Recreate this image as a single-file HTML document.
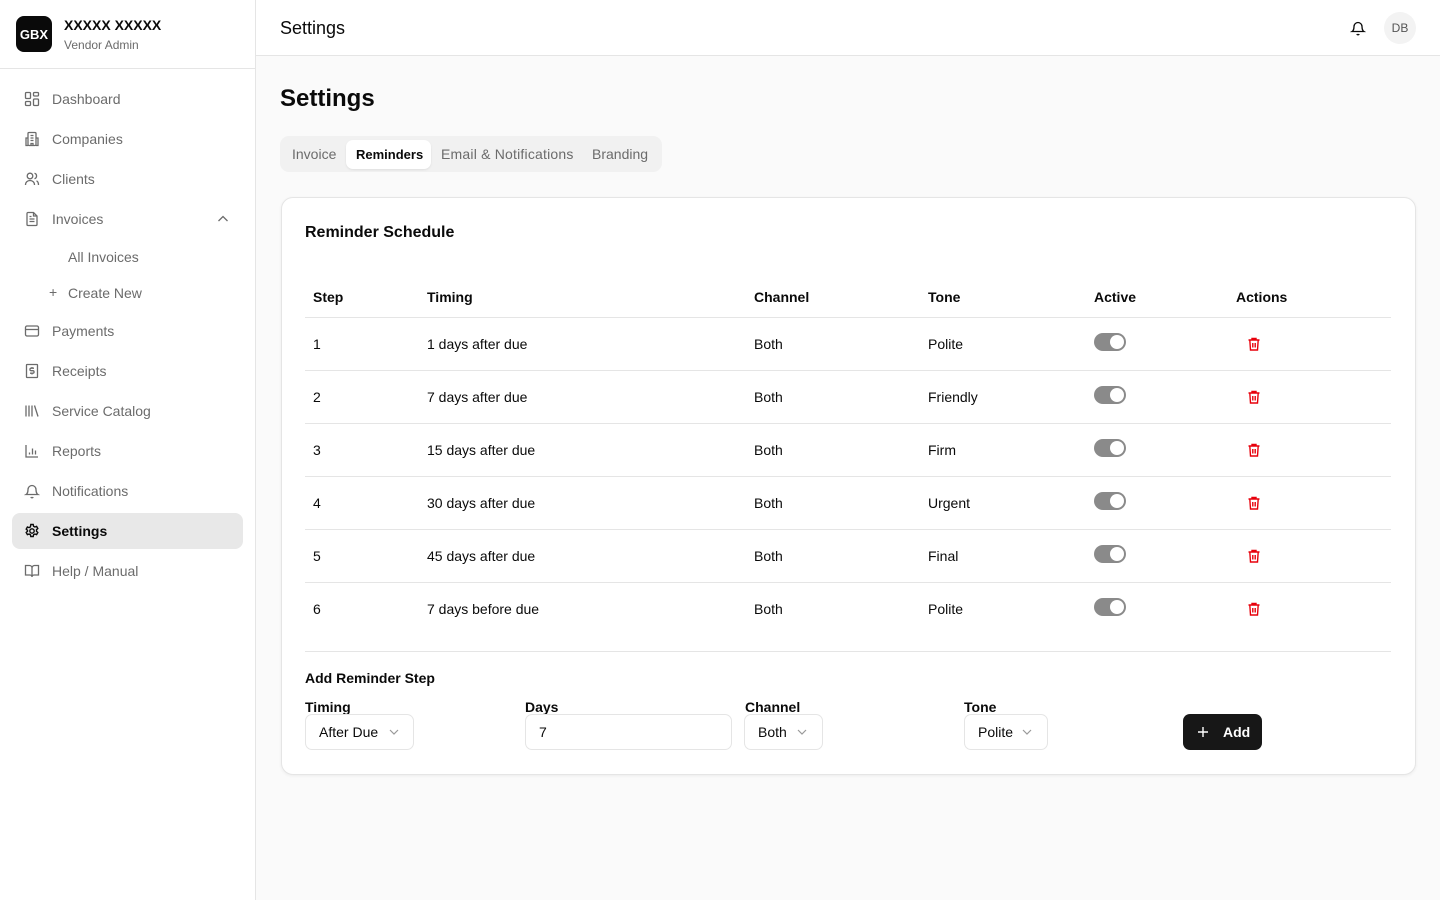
<!DOCTYPE html>
<html><head><meta charset="utf-8">
<style>
*{box-sizing:border-box;margin:0;padding:0}
body{width:1440px;height:900px;overflow:hidden;background:#fafafa;font-family:"Liberation Sans","DejaVu Sans",sans-serif;color:#0a0a0a;position:relative}
.abs{position:absolute}
#side{position:absolute;left:0;top:0;width:256px;height:900px;background:#fff;border-right:1px solid #e5e5e5}
.logo{position:absolute;left:16px;top:16px;width:36px;height:36px;border-radius:8px;background:#0a0a0a;color:#fff;font-weight:bold;font-size:13px;display:flex;align-items:center;justify-content:center}
.nav{position:absolute;left:12px;width:231px;height:36px;border-radius:8px;display:flex;align-items:center;font-size:14px;color:#6b6b6b}
.nav svg{position:absolute;left:12px;top:10px}
.nav span{position:absolute;left:40px}
.nav.act{background:#e8e8e8;color:#0a0a0a;font-weight:bold}
.th{position:absolute;top:289px;font-size:14px;font-weight:bold}
.cell{position:absolute;font-size:14px}
.line{position:absolute;left:305px;width:1086px;height:1px;background:#e5e5e5}
.tog{position:absolute;left:1094px;width:32px;height:18px;border-radius:9px;background:#8a8a8a}
.tog:after{content:"";position:absolute;right:2px;top:2px;width:14px;height:14px;border-radius:50%;background:#fff}
.inp{position:absolute;top:714px;height:36px;border:1px solid #e5e5e5;border-radius:7px;background:#fff;font-size:14px;padding-left:13px;line-height:34px}
.lab{position:absolute;top:699px;font-size:14px;font-weight:bold}
.chev{position:absolute;top:13px}
</style></head><body>
<div id="side">
 <div class="logo">GBX</div>
 <div class="abs" style="left:64px;top:17px;font-size:14px;font-weight:bold">XXXXX XXXXX</div>
 <div class="abs" style="left:64px;top:38px;font-size:12px;color:#6b6b6b">Vendor Admin</div>
 <div class="abs" style="left:0;top:68px;width:256px;height:1px;background:#e5e5e5"></div>

 <div class="nav" style="top:81px"><svg width="16" height="16" viewBox="0 0 16 16" fill="none" stroke="#6b6b6b" stroke-width="1.3"><rect x="1.5" y="1.5" width="5" height="6" rx="1"/><rect x="9.5" y="1.5" width="5" height="3.5" rx="1"/><rect x="9.5" y="8" width="5" height="6.5" rx="1"/><rect x="1.5" y="10.5" width="5" height="4" rx="1"/></svg><span>Dashboard</span></div>
 <div class="nav" style="top:121px"><svg width="16" height="16" viewBox="0 0 16 16" fill="none" stroke="#6b6b6b" stroke-width="1.3"><rect x="4" y="1.5" width="8" height="13" rx="1"/><path d="M4 7H2v7.5h2M12 7h2v7.5h-2M6.5 4.5h3M6.5 7h3M6.5 9.5h3M7 14.5v-2h2v2"/></svg><span>Companies</span></div>
 <div class="nav" style="top:161px"><svg width="16" height="16" viewBox="0 0 16 16" fill="none" stroke="#6b6b6b" stroke-width="1.3"><circle cx="6" cy="5" r="2.8"/><path d="M1.5 14c0-2.8 2-4.5 4.5-4.5s4.5 1.7 4.5 4.5M10.5 2.3a2.8 2.8 0 0 1 0 5.4M12.5 9.8c1.3.6 2 2 2 4.2"/></svg><span>Clients</span></div>
 <div class="nav" style="top:201px"><svg width="16" height="16" viewBox="0 0 16 16" fill="none" stroke="#6b6b6b" stroke-width="1.3"><path d="M9.5 1.5H4a1 1 0 0 0-1 1v11a1 1 0 0 0 1 1h8a1 1 0 0 0 1-1V5z"/><path d="M9.5 1.5V5H13M5.5 8h5M5.5 10.5h5M5.5 5.5h2"/></svg><span>Invoices</span><svg style="left:205px;top:14px" width="12" height="8" viewBox="0 0 12 8" fill="none" stroke="#6b6b6b" stroke-width="1.3"><path d="M1.5 6L6 1.5 10.5 6"/></svg></div>
 <div class="abs" style="left:68px;top:249px;font-size:14px;color:#6b6b6b">All Invoices</div>
 <div class="abs" style="left:49px;top:284px;font-size:14px;color:#6b6b6b">+</div>
 <div class="abs" style="left:68px;top:285px;font-size:14px;color:#6b6b6b">Create New</div>
 <div class="nav" style="top:313px"><svg width="16" height="16" viewBox="0 0 16 16" fill="none" stroke="#6b6b6b" stroke-width="1.3"><rect x="1.5" y="3" width="13" height="10" rx="1.5"/><path d="M1.5 6.5h13"/></svg><span>Payments</span></div>
 <div class="nav" style="top:353px"><svg width="16" height="16" viewBox="0 0 16 16" fill="none" stroke="#6b6b6b" stroke-width="1.3"><rect x="2.5" y="1.5" width="11" height="13" rx="0.5"/><path d="M10 5.2H7.2a1.2 1.2 0 0 0 0 2.5h1.6a1.2 1.2 0 0 1 0 2.5H6M8 4v1.2M8 10.2v1.3"/></svg><span>Receipts</span></div>
 <div class="nav" style="top:393px"><svg width="16" height="16" viewBox="0 0 16 16" fill="none" stroke="#6b6b6b" stroke-width="1.3"><path d="M2 2.5v11M5 2.5v11M8 2.5v11M10.5 2.5l3.5 11"/></svg><span>Service Catalog</span></div>
 <div class="nav" style="top:433px"><svg width="16" height="16" viewBox="0 0 16 16" fill="none" stroke="#6b6b6b" stroke-width="1.3"><path d="M2 2v12h12M5.5 11.5v-2M8.5 11.5v-6M11.5 11.5v-4"/></svg><span>Reports</span></div>
 <div class="nav" style="top:473px"><svg width="16" height="16" viewBox="0 0 16 16" fill="none" stroke="#6b6b6b" stroke-width="1.3"><path d="M4 6.5a4 4 0 0 1 8 0c0 4 1.8 5 1.8 5H2.2S4 10.5 4 6.5M6.8 14a1.3 1.3 0 0 0 2.4 0"/></svg><span>Notifications</span></div>
 <div class="nav act" style="top:513px"><svg width="16" height="16" viewBox="0 0 16 16" fill="none" stroke="#0a0a0a" stroke-width="1.4"><circle cx="8" cy="8" r="2.2"/><path d="M6.8 1.5h2.4l.4 1.8 1.3.7 1.7-.6 1.2 2.1-1.3 1.2v1.6l1.3 1.2-1.2 2.1-1.7-.6-1.3.7-.4 1.8H6.8l-.4-1.8-1.3-.7-1.7.6-1.2-2.1 1.3-1.2V7.3L2.2 6.1l1.2-2.1 1.7.6 1.3-.7z"/></svg><span>Settings</span></div>
 <div class="nav" style="top:553px"><svg width="16" height="16" viewBox="0 0 16 16" fill="none" stroke="#6b6b6b" stroke-width="1.3"><path d="M1.5 2.5h4A2.5 2.5 0 0 1 8 5v9a2 2 0 0 0-2-2H1.5zM14.5 2.5h-4A2.5 2.5 0 0 0 8 5v9a2 2 0 0 1 2-2h4.5z"/></svg><span>Help / Manual</span></div>
</div>

<div class="abs" style="left:256px;top:0;width:1184px;height:56px;background:#fff;border-bottom:1px solid #e5e5e5"></div>
<div class="abs" style="left:280px;top:18px;font-size:18px">Settings</div>
<svg class="abs" style="left:1350px;top:20px" width="16" height="16" viewBox="0 0 16 16" fill="none" stroke="#0a0a0a" stroke-width="1.3"><path d="M4 6.5a4 4 0 0 1 8 0c0 4 1.8 5 1.8 5H2.2S4 10.5 4 6.5M6.8 14a1.3 1.3 0 0 0 2.4 0"/></svg>
<div class="abs" style="left:1384px;top:12px;width:32px;height:32px;border-radius:50%;background:#f3f3f3;font-size:12px;color:#555;display:flex;align-items:center;justify-content:center">DB</div>

<div class="abs" style="left:280px;top:85px;font-size:24px;font-weight:bold">Settings</div>

<div class="abs" style="left:280px;top:136px;width:382px;height:36px;border-radius:9px;background:#f1f1f1"></div>
<div class="abs" style="left:346px;top:140px;width:85px;height:29px;border-radius:7px;background:#fff;box-shadow:0 1px 2px rgba(0,0,0,.08)"></div>
<div class="abs" style="left:292px;top:146px;font-size:14px;color:#6b6b6b">Invoice</div>
<div class="abs" style="left:356px;top:147px;font-size:13px;font-weight:bold">Reminders</div>
<div class="abs" style="left:441px;top:146px;font-size:14px;color:#6b6b6b;letter-spacing:0.2px">Email &amp; Notifications</div>
<div class="abs" style="left:592px;top:146px;font-size:14px;color:#6b6b6b">Branding</div>

<div class="abs" style="left:281px;top:197px;width:1135px;height:578px;border:1px solid #e5e5e5;border-radius:12px;background:#fff;box-shadow:0 1px 3px rgba(0,0,0,.06)"></div>
<div class="abs" style="left:305px;top:224px;font-size:16px;font-weight:bold">Reminder Schedule</div>

<div class="th" style="left:313px">Step</div>
<div class="th" style="left:427px">Timing</div>
<div class="th" style="left:754px">Channel</div>
<div class="th" style="left:928px">Tone</div>
<div class="th" style="left:1094px">Active</div>
<div class="th" style="left:1236px">Actions</div>
<div class="line" style="top:317px"></div>

<div id="rows"></div>
<script>
var d=[["1","1 days after due","Polite"],["2","7 days after due","Friendly"],["3","15 days after due","Firm"],["4","30 days after due","Urgent"],["5","45 days after due","Final"],["6","7 days before due","Polite"]];
var h="";
d.forEach(function(r,i){var c=344+53*i;var t=c-8;
h+='<div class="cell" style="left:313px;top:'+t+'px">'+r[0]+'</div><div class="cell" style="left:427px;top:'+t+'px">'+r[1]+'</div><div class="cell" style="left:754px;top:'+t+'px">Both</div><div class="cell" style="left:928px;top:'+t+'px">'+r[2]+'</div><div class="tog" style="top:'+(c-11)+'px"></div>';
h+='<svg class="abs" style="left:1246px;top:'+(c-8)+'px" width="16" height="16" viewBox="0 0 16 16" fill="none" stroke="#e7000b" stroke-width="1.4"><path d="M2.5 4h11M6 4V2.5h4V4M3.8 4l.7 10h7l.7-10M6.8 7v4.5M9.2 7v4.5"/></svg>';
if(i<5)h+='<div class="line" style="top:'+(c+26)+'px"></div>';});
document.getElementById("rows").innerHTML=h;
</script>
<div class="line" style="top:651px"></div>

<div class="abs" style="left:305px;top:670px;font-size:14px;font-weight:bold">Add Reminder Step</div>
<div class="lab" style="left:305px">Timing</div>
<div class="lab" style="left:525px">Days</div>
<div class="lab" style="left:745px">Channel</div>
<div class="lab" style="left:964px">Tone</div>
<div class="inp" style="left:305px;width:109px">After Due<svg class="chev" style="left:83px" width="10" height="8" viewBox="0 0 10 8" fill="none" stroke="#999" stroke-width="1.2"><path d="M1 2l4 4 4-4"/></svg></div>
<div class="inp" style="left:525px;width:207px">7</div>
<div class="inp" style="left:744px;width:79px">Both<svg class="chev" style="left:52px" width="10" height="8" viewBox="0 0 10 8" fill="none" stroke="#999" stroke-width="1.2"><path d="M1 2l4 4 4-4"/></svg></div>
<div class="inp" style="left:964px;width:84px">Polite<svg class="chev" style="left:57px" width="10" height="8" viewBox="0 0 10 8" fill="none" stroke="#999" stroke-width="1.2"><path d="M1 2l4 4 4-4"/></svg></div>
<div class="abs" style="left:1183px;top:714px;width:79px;height:36px;border-radius:7px;background:#171717;color:#fff;font-size:14px;font-weight:bold">
 <svg class="abs" style="left:14px;top:12px" width="12" height="12" viewBox="0 0 12 12" stroke="#fff" stroke-width="1.4"><path d="M6 1v10M1 6h10"/></svg>
 <span class="abs" style="left:40px;top:10px">Add</span></div>
</body></html>
